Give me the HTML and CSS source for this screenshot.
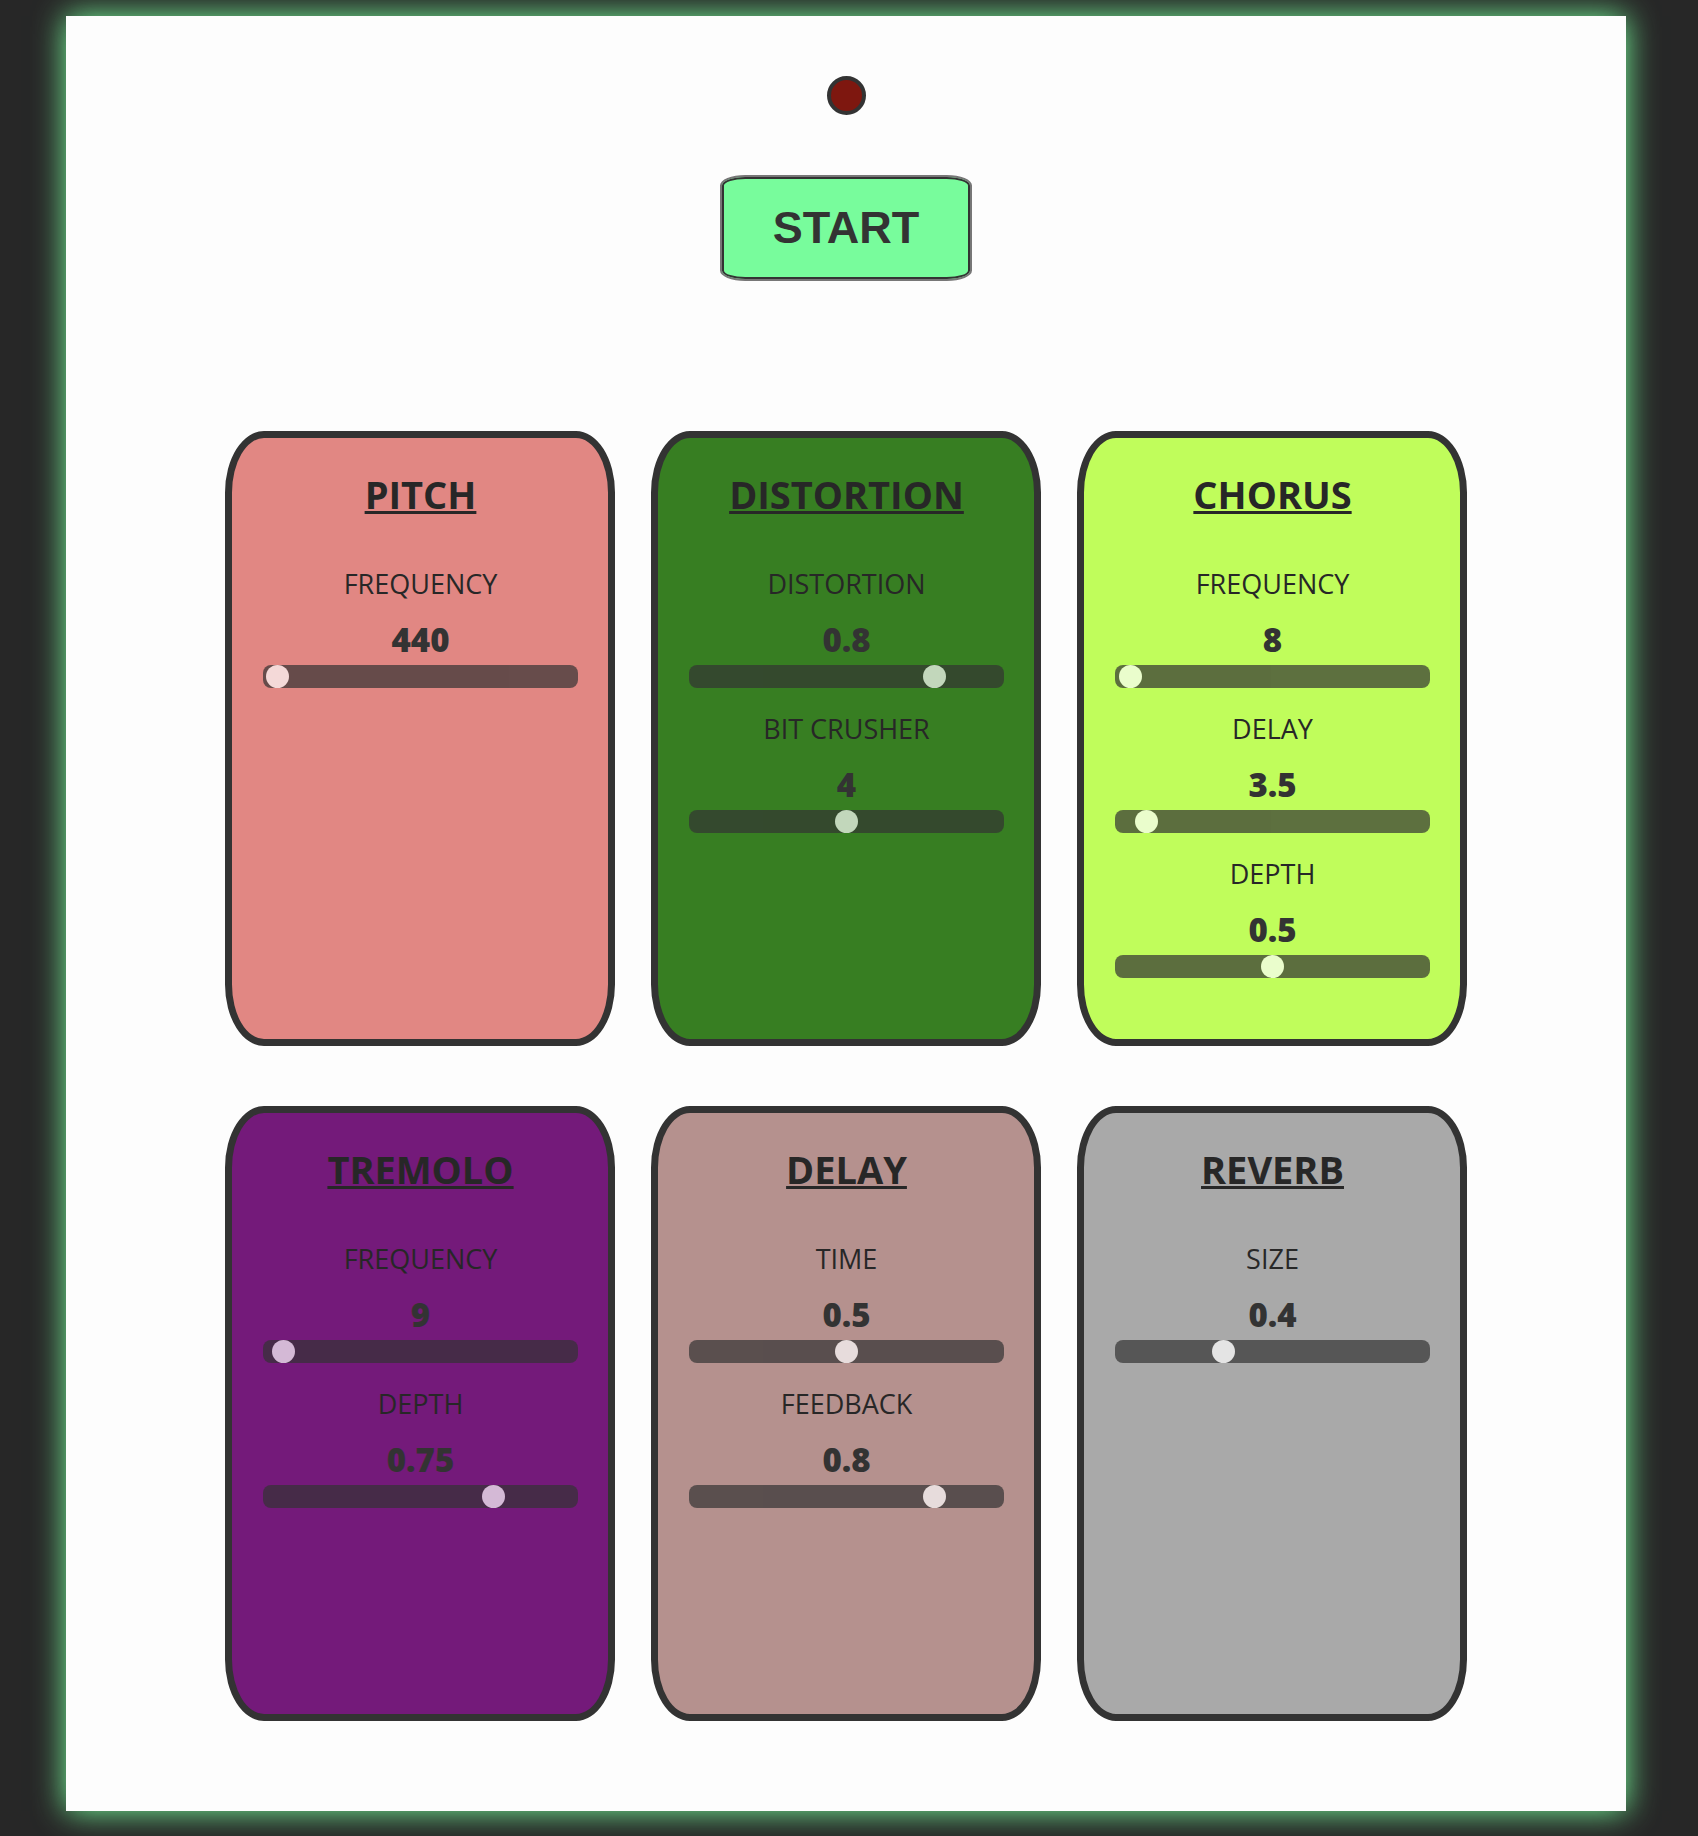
FILE: index.html
```html
<!DOCTYPE html>
<html lang="en">
<head>
<meta charset="utf-8">
<meta name="viewport" content="width=device-width, initial-scale=1">
<title>Synth Effects</title>
<link rel="stylesheet" href="styles.css">
</head>
<body>
<main class="panel">
  <header class="power">
    <div class="lamp"></div>
    <button class="start" type="button">START</button>
  </header>
  <div class="effects">
    <section class="effect pitch">
      <h2 class="title">PITCH</h2>
      <div class="control">
        <label class="label" for="pitch-frequency">FREQUENCY</label>
        <output class="value" for="pitch-frequency">440</output>
        <input class="slider" id="pitch-frequency" type="range" min="240" max="20000" value="440">
      </div>
    </section>
    <section class="effect distortion">
      <h2 class="title">DISTORTION</h2>
      <div class="control">
        <label class="label" for="distortion-amount">DISTORTION</label>
        <output class="value" for="distortion-amount">0.8</output>
        <input class="slider" id="distortion-amount" type="range" min="0" max="1" step="0.1" value="0.8">
      </div>
      <div class="control">
        <label class="label" for="bit-crusher">BIT CRUSHER</label>
        <output class="value" for="bit-crusher">4</output>
        <input class="slider" id="bit-crusher" type="range" min="0" max="8" value="4">
      </div>
    </section>
    <section class="effect chorus">
      <h2 class="title">CHORUS</h2>
      <div class="control">
        <label class="label" for="chorus-frequency">FREQUENCY</label>
        <output class="value" for="chorus-frequency">8</output>
        <input class="slider" id="chorus-frequency" type="range" min="0" max="580" value="8">
      </div>
      <div class="control">
        <label class="label" for="chorus-delay">DELAY</label>
        <output class="value" for="chorus-delay">3.5</output>
        <input class="slider" id="chorus-delay" type="range" min="0" max="50" step="0.5" value="3.5">
      </div>
      <div class="control">
        <label class="label" for="chorus-depth">DEPTH</label>
        <output class="value" for="chorus-depth">0.5</output>
        <input class="slider" id="chorus-depth" type="range" min="0" max="1" step="0.1" value="0.5">
      </div>
    </section>
    <section class="effect tremolo">
      <h2 class="title">TREMOLO</h2>
      <div class="control">
        <label class="label" for="tremolo-frequency">FREQUENCY</label>
        <output class="value" for="tremolo-frequency">9</output>
        <input class="slider" id="tremolo-frequency" type="range" min="0" max="290" value="9">
      </div>
      <div class="control">
        <label class="label" for="tremolo-depth">DEPTH</label>
        <output class="value" for="tremolo-depth">0.75</output>
        <input class="slider" id="tremolo-depth" type="range" min="0" max="1" step="0.05" value="0.75">
      </div>
    </section>
    <section class="effect delay">
      <h2 class="title">DELAY</h2>
      <div class="control">
        <label class="label" for="delay-time">TIME</label>
        <output class="value" for="delay-time">0.5</output>
        <input class="slider" id="delay-time" type="range" min="0" max="1" step="0.1" value="0.5">
      </div>
      <div class="control">
        <label class="label" for="delay-feedback">FEEDBACK</label>
        <output class="value" for="delay-feedback">0.8</output>
        <input class="slider" id="delay-feedback" type="range" min="0" max="1" step="0.1" value="0.8">
      </div>
    </section>
    <section class="effect reverb">
      <h2 class="title">REVERB</h2>
      <div class="control">
        <label class="label" for="reverb-size">SIZE</label>
        <output class="value" for="reverb-size">0.4</output>
        <input class="slider" id="reverb-size" type="range" min="0.1" max="1" step="0.1" value="0.4">
      </div>
    </section>
  </div>
</main>
</body>
</html>
```
FILE: styles.css
```css
* {
  box-sizing: border-box;
}

body {
  margin: 0;
  padding: 16px 72px 25px 66px;
  background: #272727;
  color: #272727;
  font-family: "Open Sans", "Noto Sans", sans-serif;
}

.panel {
  padding: 60px 24px 90px;
  background: #fdfdfd;
  box-shadow: 0 0 30px #78fc9c;
}

.power {
  display: flex;
  flex-direction: column;
  align-items: center;
  gap: 60px;
  margin-bottom: 150px;
}

.lamp {
  width: 39px;
  height: 39px;
  border: 4px solid #333;
  border-radius: 50%;
  background: #7e170f;
}

.start {
  padding: 24px 51px;
  border: 2px solid #777;
  border-radius: 10%;
  background: #78fc9c;
  box-shadow: inset 0 0 0 2px #333;
  color: #333;
  font: bold 45px/54px "Liberation Sans", Arial, sans-serif;
}

.effects {
  display: grid;
  grid-template-columns: repeat(auto-fit, 390px);
  grid-auto-rows: 1fr;
  justify-content: center;
  gap: 60px 36px;
  max-width: 1242px;
  margin: 0 auto;
}

.effect {
  display: flex;
  flex-direction: column;
  gap: 23px;
  padding: 30px 30px 61px 31px;
  border: 7px solid #333;
  border-radius: 10%;
  text-align: center;
}

.title {
  margin: 0 0 23px;
  font-size: 38px;
  font-weight: 700;
  line-height: 52px;
  text-decoration: underline 3px;
}

.control {
  display: flex;
  flex-direction: column;
}

.label {
  margin-bottom: 15px;
  font-size: 27px;
  line-height: 36px;
}

.value {
  margin-bottom: 3px;
  color: #333;
  font-size: 33px;
  font-weight: 800;
  line-height: 45px;
}

.slider {
  appearance: none;
  width: 100%;
  height: 23px;
  margin: 0;
  border-radius: 8px;
  background: #333;
  opacity: 0.7;
}

.slider::-webkit-slider-thumb {
  appearance: none;
  width: 23px;
  height: 23px;
  border-radius: 50%;
  background: #fdfdfd;
}

.slider::-moz-range-thumb {
  width: 23px;
  height: 23px;
  border: 0;
  border-radius: 50%;
  background: #fdfdfd;
}

.pitch { background: #e18783; }
.distortion { background: #377e22; }
.chorus { background: #c0fd5b; }
.tremolo { background: #741a7a; }
.delay { background: #b5918e; }
.reverb { background: #a9a9a9; }
```
